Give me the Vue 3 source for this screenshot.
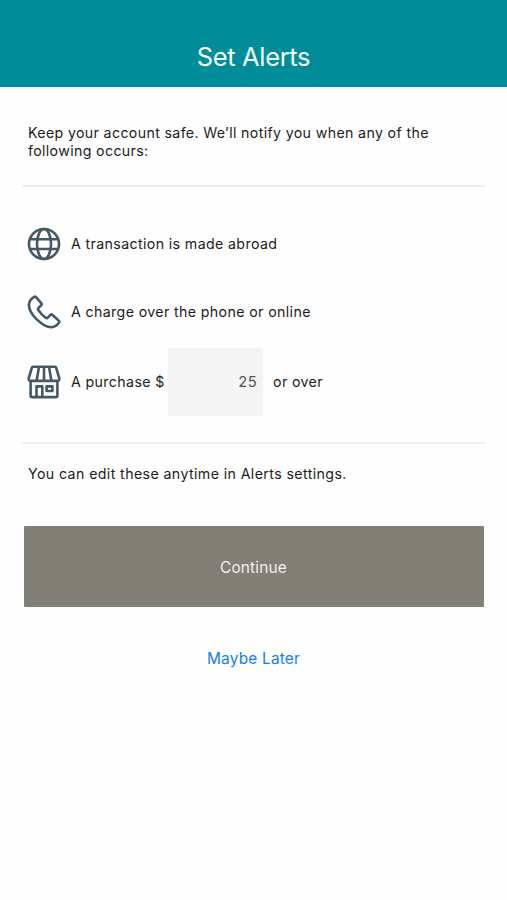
<script setup>
import { ref } from 'vue'

const amount = ref('25')
</script>

<template>
  <div class="screen">
    <header class="header"><h1>Set Alerts</h1></header>
    <main>
      <p class="intro"><span>Keep your account safe. We’ll notify you when any of the</span><br><span>following occurs:</span></p>
      <section class="alerts">
        <div class="row">
          <svg class="icon" viewBox="0 0 34 34">
            <circle cx="17" cy="17" r="15" />
            <ellipse cx="17" cy="17" rx="7" ry="15" />
            <path d="M3.2 12.2h27.6M3.2 22h27.6" />
          </svg>
          <span>A transaction is made abroad</span>
        </div>
        <div class="row phone-row">
          <svg class="icon" viewBox="0 0 34 34">
            <path d="M7.2 1.9Q8.1 1.3 9 2.2L14.4 8.4Q15.1 9.4 14.3 10.2L11.5 12.9Q10.7 13.8 11.3 14.8Q14.2 19.7 18.9 22.9Q20 23.5 20.8 22.6L23.5 19.8Q24.3 19 25.3 19.7L31.7 25.6Q32.8 26.6 31.9 27.7Q28.8 32.1 23.5 32.2Q17 31.7 9.5 24.2Q2 16.7 1.9 9.9Q2.2 4.8 7.2 1.9Z" />
          </svg>
          <span>A charge over the phone or online</span>
        </div>
        <div class="row purchase-row">
          <svg class="icon" viewBox="0 0 34 34">
            <path d="M6.2 1.7h21.6q1.1 0 1.4 1.1l3.1 10.6q.3 2.5-2.6 2.5H4.3q-2.9 0-2.6-2.5L4.8 2.8q.3-1.1 1.4-1.1Z" />
            <path d="M12 1.7 9.6 15.9M17 1.7v14.2M22 1.7l2.4 14.2M3.6 15.9v14.6q0 1.6 1.6 1.6h23.6q1.6 0 1.6-1.6V15.9M9.5 32V21.4h5.8V32M19.6 21.4h5.8v4.6h-5.8z" />
          </svg>
          <span class="purchase">A purchase $</span>
          <input v-model="amount" class="amount" aria-label="Purchase amount">
          <span>or over</span>
        </div>
      </section>
      <p class="note">You can edit these anytime in Alerts settings.</p>
      <button class="continue" type="button">Continue</button>
      <button class="later" type="button">Maybe Later</button>
    </main>
  </div>
</template>

<style>
body { background: #fefefe; }
</style>

<style scoped>
.screen {
  min-height: 900px;
  font-family: Inter, "Liberation Sans", sans-serif;
  font-size: 14.2px;
  line-height: 18px;
  letter-spacing: 0.37px;
  color: #1c1c1c;
  background: #fefefe;
}
.header {
  height: 87px;
  box-sizing: border-box;
  padding-top: 40px;
  background: #008c99;
  color: #f4ffff;
  text-align: center;
}
h1 { margin: 0; font-size: 25.5px; line-height: 34px; font-weight: 400; letter-spacing: -0.35px; }
main { padding: 0 22px; }
.intro {
  height: 98px;
  box-sizing: border-box;
  margin: 0;
  padding: 37px 0 0 6px;
  line-height: 17.5px;
  letter-spacing: 0.35px;
  white-space: nowrap;
}
.alerts {
  height: 259px;
  box-sizing: border-box;
  padding: 25px 0 0 5px;
  border-top: 2px solid #efefef;
  border-bottom: 2px solid #efefef;
}
.row { display: flex; align-items: center; height: 64px; white-space: nowrap; }
.phone-row { height: 71px; }
.purchase-row { height: 68px; margin-top: 1px; }
.icon {
  width: 34px;
  height: 34px;
  flex: none;
  margin-right: 10px;
  fill: none;
  stroke: #435966;
  stroke-width: 2.6;
  stroke-linejoin: round;
}
.purchase { width: 97px; flex: none; }
.amount {
  width: 95px;
  height: 68px;
  box-sizing: border-box;
  margin: 0 10px 0 0;
  padding: 0 6px 1px 0;
  border: 0;
  border-radius: 0;
  background: #f4f4f4;
  color: #555;
  font: inherit;
  font-size: 14.8px;
  letter-spacing: inherit;
  text-align: right;
}
.note { height: 82px; box-sizing: border-box; margin: 0; padding: 21px 0 0 6px; letter-spacing: 0.39px; }
.continue, .later { display: block; padding: 2px 0 0; border: 0; font: inherit; font-size: 15.4px; letter-spacing: 0.2px; }
.continue {
  width: 460px;
  height: 81px;
  margin: 0 auto;
  border-radius: 1px;
  background: #827f77;
  color: #f1f0ed;
}
.later { height: 30px; margin: 36px auto 0; background: none; color: #147ff0; }
</style>
